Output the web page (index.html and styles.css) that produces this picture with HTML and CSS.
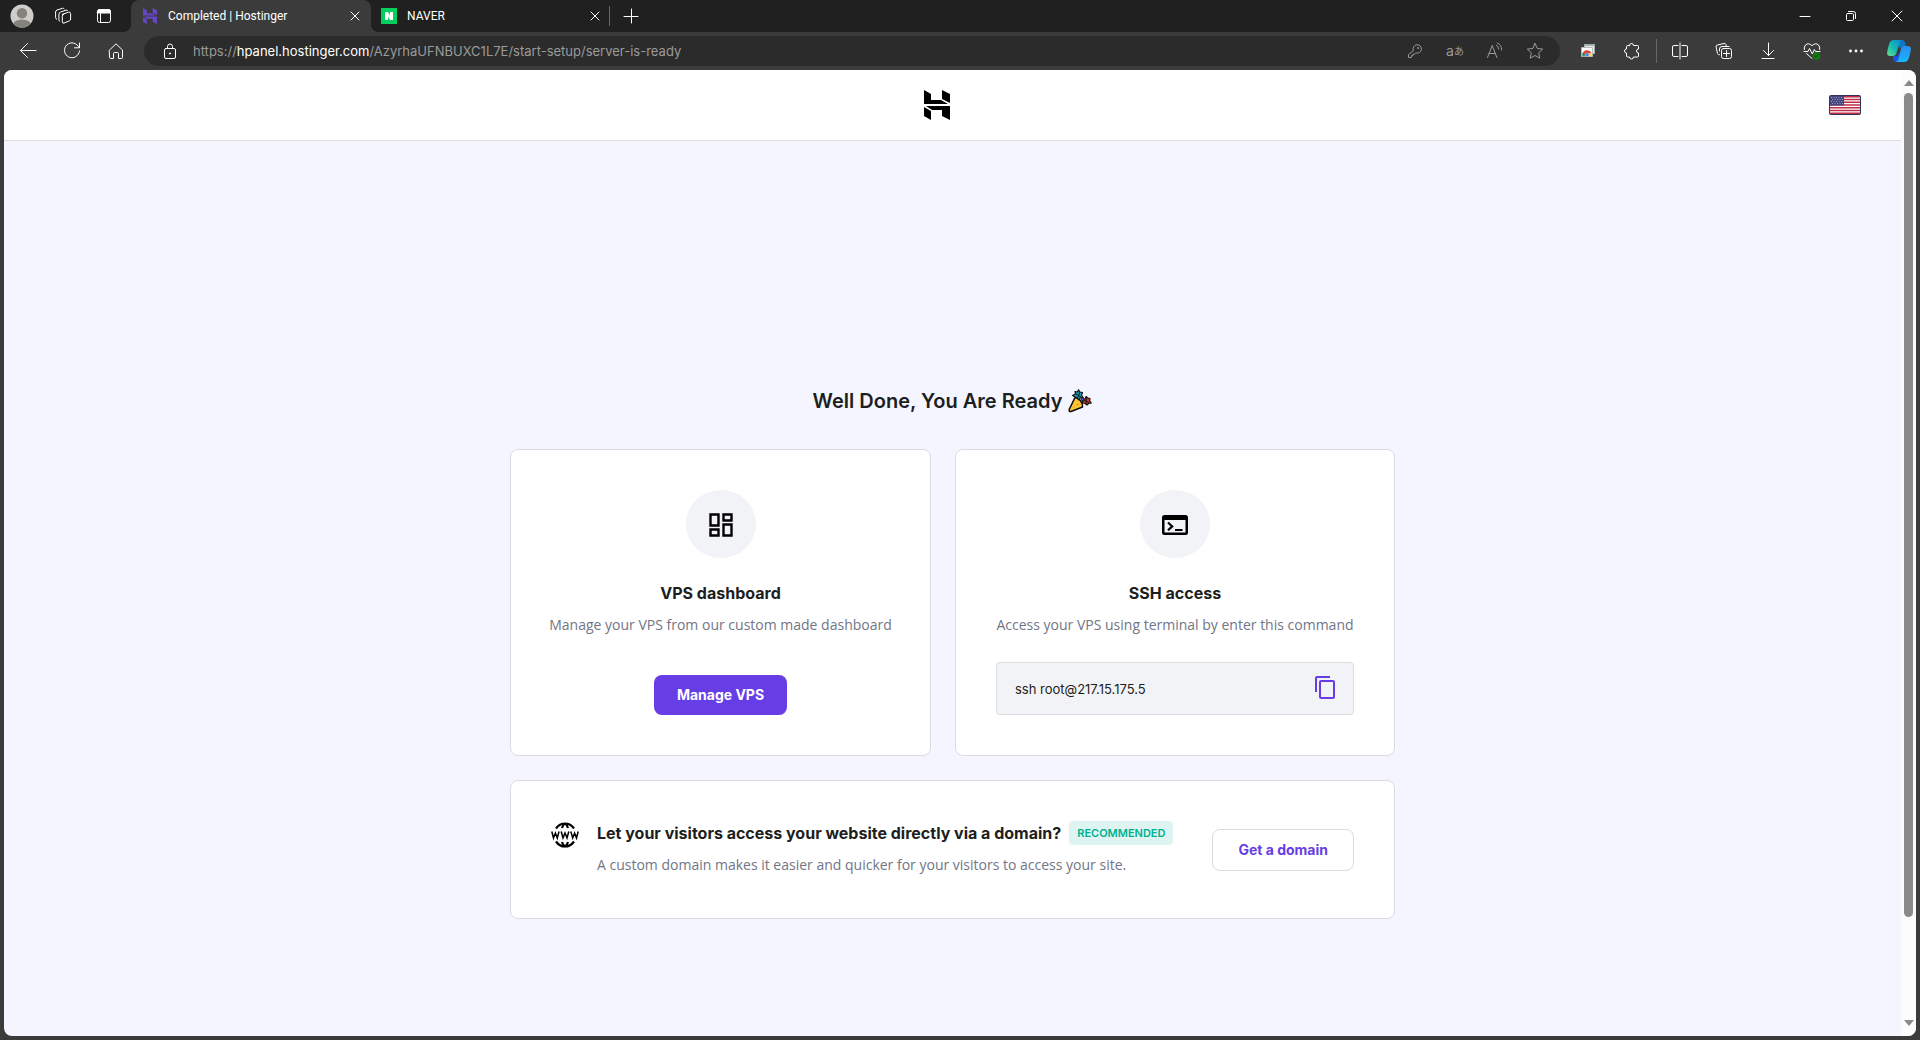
FILE: index.html
```html
<!DOCTYPE html>
<html lang="en">
<head>
<meta charset="utf-8">
<title>Completed | Hostinger</title>
<link rel="stylesheet" href="styles.css">
</head>
<body>
<div class="tabstrip">
  <div class="strip-tools">
    <button class="strip-btn" aria-label="Profile">
      <svg width="24" height="24" viewBox="0 0 24 24"><defs><clipPath id="face"><circle cx="12" cy="12" r="11.5"/></clipPath></defs><circle cx="12" cy="12" r="11.5" fill="#cfccc9"/><g fill="#85817d" clip-path="url(#face)"><circle cx="12" cy="9.2" r="5.2"/><ellipse cx="12" cy="21" rx="9" ry="5.6"/></g></svg>
    </button>
    <button class="strip-btn" aria-label="Workspaces">
      <svg class="line" width="18" height="18" viewBox="0 0 18 18"><path d="M8.2 7.4 14.6 5.2Q16.6 4.8 16.6 6.7V12Q16.6 13.4 15.3 13.9L10 16.1Q8.3 16.6 8.3 14.7V9.2Q8.3 7.7 9.8 7.2M5.7 14.4Q4.9 14 4.9 12.7V7.2Q4.9 5.6 6.3 5.1L12 3.2Q13.2 2.9 13.6 3.5M2.6 12.3Q1.6 12 1.6 10.6V5Q1.6 3.6 3 3L8.4 1.3Q9.7 1 10.2 1.8"/></svg>
    </button>
    <button class="strip-btn" aria-label="Vertical tabs">
      <svg class="line" width="16" height="16" viewBox="0 0 16 16"><rect x="1.5" y="1.5" width="13" height="13" rx="2"/><path d="M1.5 3.5Q1.5 1.5 3.5 1.5H12.500Q14.500 1.500 14.500 3.500V5H1.500Z" fill="#fff"/><path d="M4.500 5V14.500"/></svg>
    </button>
  </div>
  <div class="tab tab-active">
    <svg width="16" height="16" viewBox="0 0 26 30" fill="#6747c7"><path d="M0 0 7 4V10H17L24 14H0ZM18 0 26 4V13L18 9ZM26 16V30L18 26V20H8L2 16ZM0 17 7 21V30L0 26Z"/></svg>
    <span class="tab-title">Completed | Hostinger</span>
    <button class="tab-close" aria-label="Close tab"><svg class="line" width="10" height="10" viewBox="0 0 10 10"><path d="M1 1 9 9M9 1 1 9"/></svg></button>
  </div>
  <div class="tab">
    <svg width="16" height="16" viewBox="0 0 16 16"><path fill="#03cf5d" d="M0 0H16V16H0Z"/><path fill="#fff" d="M4 4H7L9 7.500V4H12V12H9L7 8.500V12H4Z"/></svg>
    <span class="tab-title">NAVER</span>
    <button class="tab-close" aria-label="Close tab"><svg class="line" width="10" height="10" viewBox="0 0 10 10"><path d="M1 1 9 9M9 1 1 9"/></svg></button>
  </div>
  <span class="tab-divider"></span>
  <button class="new-tab" aria-label="New tab"><svg class="line" width="14" height="14" viewBox="0 0 14 14"><path d="M7.500 0V14M0 7.500H14"/></svg></button>
  <div class="window-controls">
    <button class="window-btn" aria-label="Minimize"><svg class="line" width="10" height="10" viewBox="0 0 10 10"><path d="M0 5.500H10"/></svg></button>
    <button class="window-btn" aria-label="Restore"><svg class="line" width="10" height="10" viewBox="0 0 10 10"><rect x=".5" y="2.500" width="7" height="7" rx="1"/><path d="M2.500 .5H7.500Q9.500 .5 9.500 2.500V7.500"/></svg></button>
    <button class="window-btn" aria-label="Close"><svg class="line" width="10" height="10" viewBox="0 0 10 10"><path d="M0 0 10 10M10 0 0 10"/></svg></button>
  </div>
</div>

<div class="toolbar">
  <div class="nav-tools">
    <button class="tool-btn" aria-label="Back"><svg class="line" width="18" height="18" viewBox="0 0 18 18"><path d="M1.500 8.500H17M8.500 1.500 1.500 8.500 8.500 15.500"/></svg></button>
    <button class="tool-btn" aria-label="Refresh"><svg class="line" width="18" height="18" viewBox="0 0 18 18"><path d="M16 5.500A7.500 7.500 0 1 0 16.500 9M16.500 1V5.800H11.500"/></svg></button>
    <button class="tool-btn" aria-label="Home"><svg class="line" width="18" height="18" viewBox="0 0 18 18"><path d="M2.500 8 9 1.800 15.500 8V15.500Q15.500 16.500 14.500 16.500H11.500V11.500Q11.500 10.500 10.500 10.500H7.500Q6.500 10.500 6.500 11.500V16.500H3.500Q2.500 16.500 2.500 15.500Z"/></svg></button>
  </div>
  <div class="address">
    <button class="lock-btn" aria-label="Site information"><svg class="line" width="14" height="17" viewBox="0 0 14 17"><rect x="1.500" y="5.500" width="11" height="10" rx="1.500"/><path d="M4.500 5.500V3.500Q4.500 1 7 1T9.500 3.500V5.500"/><circle cx="7" cy="10.500" r=".6" fill="#fff"/></svg></button>
    <a class="url" href="#">https://<span class="url-host">hpanel.hostinger.com</span>/AzyrhaUFNBUXC1L7E/start-setup/server-is-ready</a>
    <div class="address-tools">
      <button class="address-btn" aria-label="Passwords"><svg class="line dim" width="16" height="16" viewBox="0 0 16 16"><path d="M6.200 7.200A4.200 4.200 0 1 1 8.800 9.900L7.500 11.200H6V12.700H4.500V14.200L4 14.500H1.500V12Z"/><circle cx="11" cy="5" r=".5"/></svg></button>
      <button class="address-btn" aria-label="Translate"><span class="glyph-a">a</span><span class="glyph-kana">あ</span></button>
      <button class="address-btn" aria-label="Read aloud"><svg class="line dim" width="18" height="18" viewBox="0 0 18 18"><path d="M1.500 15.500 6.200 3.500 10.900 15.500M3.200 11.500H9.200M10.300 3.200Q12.800 4.300 12.600 7M11.300 1Q16 2.800 15.600 8"/></svg></button>
      <button class="address-btn" aria-label="Add to favorites"><svg class="line dim" width="18" height="18" viewBox="0 0 18 18"><path d="M9 1.500 11.300 6.400 16.700 7.100 12.700 10.800 13.800 16.200 9 13.500 4.200 16.200 5.300 10.800 1.300 7.100 6.700 6.400Z"/></svg></button>
    </div>
  </div>
  <div class="browser-tools">
    <button class="tool-btn" aria-label="Web store"><svg width="16" height="16" viewBox="0 0 16 16"><path fill="#9fb0ac" d="M4 1H15V11H4Z"/><path fill="#e9eeec" d="M5 3H14V10H5Z"/><path fill="#fff" stroke="#b8b8b8" d="M1.500 4.500H12.500V13.500H1.500Z"/><path fill="#db4437" d="M2.500 11A4.800 4.800 0 0 1 11.500 10L9 10.500H5.500L4.500 12Z"/><path fill="#0f9d58" d="M2.300 9.500 5 12V13.200H2.300Z"/><path fill="#ffcd40" d="M9 10.300H11.700V13.200H8.500Z"/><circle cx="7" cy="11.700" r="1.800" fill="#4285f4"/></svg></button>
    <button class="tool-btn" aria-label="Extensions"><svg class="line" width="18" height="18" viewBox="0 0 18 18"><path d="M6.500 3.500A2 2 0 0 1 10.500 3.500H14.500Q15.500 3.500 15.500 4.500V7A2 2 0 0 0 15.500 11V14Q15.500 15 14.500 15H10.500A2 2 0 0 1 6.500 15H4.500Q3.500 15 3.500 14V11A2 2 0 0 1 3.500 7V4.500Q3.500 3.500 4.500 3.500Z"/></svg></button>
    <span class="tool-divider"></span>
    <button class="tool-btn" aria-label="Split screen"><svg class="line" width="18" height="18" viewBox="0 0 18 18"><path d="M7 3.500H3Q1.500 3.500 1.500 5V13Q1.500 14.500 3 14.500H7M11 3.500H15Q16.500 3.500 16.500 5V13Q16.500 14.500 15 14.500H11M9 1V17"/></svg></button>
    <button class="tool-btn" aria-label="Collections"><svg class="line" width="18" height="18" viewBox="0 0 18 18"><rect x="6.500" y="6.500" width="10" height="10" rx="2"/><path d="M11.500 8.500V14.500M8.500 11.500H14.500M4.500 12.800Q3 13 2.500 11.500L1.100 5Q.8 3.500 2.200 3.100L9 1.500Q10.600 1.200 11 2.700L11.400 4.500M4.500 9V7Q4.500 4.500 7 4.500H14"/></svg></button>
    <button class="tool-btn" aria-label="Downloads"><svg class="line" width="18" height="18" viewBox="0 0 18 18"><path d="M9.500 1V13.500M4.500 8.500 9.500 13.500 14.500 8.500M3 16.500H15"/></svg></button>
    <button class="tool-btn" aria-label="Browser essentials"><svg class="line" width="18" height="18" viewBox="0 0 18 18"><path d="M1.300 7.500Q.8 4.800 2.500 3Q5.500.3 9 3.700Q12.500.3 15.500 3Q17.200 4.800 16.700 7.500M1 9.500H5L6.500 6.500 9.300 12 11.300 7.500 12.500 9.500H17M3.500 11.500 9 16.500"/><circle cx="13.500" cy="14" r="3.800" fill="#107c10" stroke="none"/><path d="M11.800 14 13 15.200 15.300 12.700" stroke="#0a4f0a"/></svg></button>
    <button class="tool-btn" aria-label="Settings and more"><svg width="16" height="4" viewBox="0 0 16 4" fill="#fff"><circle cx="2.500" cy="2" r="1.400"/><circle cx="8" cy="2" r="1.400"/><circle cx="13.500" cy="2" r="1.400"/></svg></button>
    <button class="copilot-btn" aria-label="Copilot">
      <svg width="26" height="24" viewBox="0 0 26 24"><defs><linearGradient id="cpa" x1="0" y1="1" x2="1" y2="0"><stop offset="0" stop-color="#6ce08a"/><stop offset=".5" stop-color="#13b9b4"/><stop offset="1" stop-color="#0a8ad8"/></linearGradient><linearGradient id="cpb" x1="0" y1="0" x2="0" y2="1"><stop offset="0" stop-color="#2b8df0"/><stop offset="1" stop-color="#19b6ff"/></linearGradient></defs><path fill="#0b78c6" d="M8 1H16Q18.500 1 19.300 4L20 7H17Q15 7 14.200 9.500Z"/><path fill="#1f4fe0" d="M7 17H11L14 13 12.500 20Q11.800 23 9.500 22.800Q7.500 22.600 7 20Z"/><path fill="url(#cpa)" d="M8 1H14.500L10.500 14Q9.700 17 7 17H4Q.6 17 1.200 13Q2 8 3.500 4Q4.800 1 8 1Z"/><path fill="url(#cpb)" d="M17.500 7H21.500Q25.500 7 24.800 11Q24 16 22.500 20Q21.300 23 18.500 23H9.500Q11.800 22.500 12.500 20L15 9.500Q15.700 7 17.500 7Z"/></svg>
    </button>
  </div>
</div>

<div class="viewport">
  <div class="page">
    <header class="page-header">
      <a class="brand" href="#" aria-label="Hostinger"><svg width="26" height="30" viewBox="0 0 26 30"><path d="M0 0 7 4V10H17L24 14H0ZM18 0 26 4V13L18 9ZM26 16V30L18 26V20H8L2 16ZM0 17 7 21V30L0 26Z"/></svg></a>
      <button class="flag-btn" aria-label="Language">
        <svg width="32" height="20" viewBox="0 0 32 20"><rect width="32" height="20" rx="2" fill="#32355a"/><path fill="#fff" d="M1 1H31V19H1Z"/><path stroke="#c02c45" stroke-width="1.500" d="M1 1.800H31M1 4.500H31M1 7.300H31M1 10H31M1 12.800H31M1 15.500H31M1 18.200H31"/><path fill="#46467f" d="M1 1H15V10.500H1Z"/><path stroke="#9a9ac0" stroke-dasharray="1 1.500" d="M2 2.500H14M3 4.500H14M2 6.500H14M3 8.500H14"/></svg>
      </button>
    </header>
    <main class="content">
      <h1 class="headline">Well Done, You Are Ready
        <svg width="24" height="24" viewBox="0 0 24 24" aria-hidden="true"><path fill="#ffc634" stroke="#111" stroke-width="1.600" stroke-linejoin="round" d="M7 8.500Q10.500 8.500 13 12.500Q15 15.500 14.500 18L3 22.500Q.8 22.800 1.200 20.500Z"/><path fill="#18a2c4" stroke="#111" stroke-width="1.200" stroke-linejoin="round" d="M8.500 8.500 4.500 6.500 7.500 5 7 2.500 9.500 3 10.500.8 12 3 14.500 3.500 13.500 6 15 8.500 12 9 11 11Z"/><path stroke="#111" d="M8 5 13 8M12 3 9.500 9"/><path fill="#d7372a" stroke="#111" stroke-width="1.200" stroke-linejoin="round" d="M14 13.500 15.500 10.500 17.500 9.500 18 7.500 20 9 22 9.500 21.500 11.500 23.300 14 20.500 14.500 19 16 17 14.500Z"/><path stroke="#111" d="M16 11.500 21 13.500M18.500 9.500 18 14.500"/><path fill="#6d45d8" stroke="#111" stroke-width=".8" d="M13 9.500 15.500 8.500 16 10.500 14 12Z"/><circle cx="9.500" cy="15.500" r=".8" fill="#e35a3c"/><circle cx="6" cy="18" r=".8" fill="#e3903c"/></svg>
      </h1>
      <div class="cards">
        <section class="card card-center">
          <span class="badge-icon"><svg width="24" height="24" viewBox="0 0 24 24" fill="none" stroke="#000" stroke-width="2.400"><path d="M1.500 1.500H9.500V12.500H1.500ZM14.500 1.500H22.500V7.500H14.500ZM14.500 11.500H22.500V22.500H14.500ZM1.500 16.500H9.500V22.500H1.500Z"/></svg></span>
          <h2 class="card-title">VPS dashboard</h2>
          <p class="card-text">Manage your VPS from our custom made dashboard</p>
          <button class="btn btn-primary">Manage VPS</button>
        </section>
        <section class="card card-center">
          <span class="badge-icon"><svg width="26" height="20" viewBox="0 0 26 20"><path fill-rule="evenodd" d="M2.500 0H23.500Q26 0 26 2.500V17.500Q26 20 23.500 20H2.500Q0 20 0 17.500V2.500Q0 0 2.500 0ZM2.500 5V17.500H23.500V5Z"/><path fill="none" stroke="#000" stroke-width="2.200" d="M6 7.500 10.200 11.400 6 15.300M13 15H20.500"/></svg></span>
          <h2 class="card-title">SSH access</h2>
          <p class="card-text">Access your VPS using terminal by enter this command</p>
          <div class="command">
            <code class="command-text">ssh root@217.15.175.5</code>
            <button class="copy-btn" aria-label="Copy command"><svg width="20" height="24" viewBox="0 0 20 24" fill="none" stroke="#673de6" stroke-width="2"><path d="M1 17V3Q1 2 2 2H15"/><rect x="5" y="6" width="14" height="17" rx="1"/></svg></button>
          </div>
        </section>
      </div>
      <section class="card domain">
        <svg class="domain-icon" width="28" height="28" viewBox="0 0 28 28" fill="none" stroke="#000" stroke-width="2.200" aria-hidden="true"><path d="M5 7.500Q8.500 2.500 14 2.500T23 7.500M11 7Q12 3.500 14 2.500Q16 3.500 17 7M5 20.500Q8.500 25.500 14 25.500T23 20.500M11 21Q12 24.500 14 25.500Q16 24.500 17 21"/><path stroke-width="1.500" d="M.8 10.500 2.500 17 4.400 12 6.300 17 8 10.500M10.200 10.500 12 17 14 12 16 17 17.800 10.500M19.800 10.500 21.700 17 23.600 12 25.500 17 27.200 10.500"/></svg>
        <div class="domain-body">
          <div class="domain-head">
            <h2 class="card-title">Let your visitors access your website directly via a domain?</h2>
            <span class="tag">Recommended</span>
          </div>
          <p class="card-text">A custom domain makes it easier and quicker for your visitors to access your site.</p>
        </div>
        <button class="btn btn-outline">Get a domain</button>
      </section>
    </main>
  </div>
  <div class="scrollbar" aria-hidden="true">
    <svg width="10" height="6" viewBox="0 0 10 6" fill="#8a8a8a"><path d="M0 6 5 0 10 6Z"/></svg>
    <div class="scroll-track"><div class="scroll-thumb"></div><div class="scroll-rest"></div></div>
    <svg width="10" height="6" viewBox="0 0 10 6" fill="#8a8a8a"><path d="M0 0 5 6 10 0Z"/></svg>
  </div>
</div>
</body>
</html>
```
FILE: styles.css
```css
* { box-sizing: border-box; }

body {
  margin: 0;
  height: 100vh;
  display: flex;
  flex-direction: column;
  overflow: hidden;
  background: #3b3b3b;
  font-family: Inter, "Noto Sans CJK JP", sans-serif;
  color: #1d1e20;
}

svg { display: block; flex: none; }
h1, h2, p { margin: 0; }

button {
  display: flex;
  align-items: center;
  justify-content: center;
  flex: none;
  margin: 0;
  padding: 0;
  border: 0;
  background: none;
  font-family: inherit;
  cursor: pointer;
}

.line { fill: none; stroke: #fff; stroke-linecap: round; stroke-linejoin: round; overflow: visible; }
.dim { stroke: #9a9a9a; }

/* Tab strip */
.tabstrip { display: flex; height: 32px; background: #202020; }
.strip-tools { display: flex; padding: 0 7px 0 1px; }
.strip-btn { width: 41px; }

.tab {
  position: relative;
  display: flex;
  align-items: center;
  width: 238px;
  padding: 0 8px 0 10px;
  gap: 10px;
  color: #fff;
  font: 12px/16px Roboto, sans-serif;
}
.tab-title { flex: 1; padding-bottom: 1px; white-space: nowrap; }
.tab-close { width: 12px; height: 16px; }
.tab-active {
  width: 240px;
  padding: 0 10px 0 11px;
  border-radius: 8px 8px 0 0;
  background: #3b3b3b;
}
.tab-active::before,
.tab-active::after {
  content: "";
  position: absolute;
  bottom: 0;
  width: 8px;
  height: 8px;
}
.tab-active::before { right: 100%; background: radial-gradient(circle at 0 0, #202020 8px, #3b3b3b 8px); }
.tab-active::after { left: 100%; background: radial-gradient(circle at 100% 0, #202020 8px, #3b3b3b 8px); }
.tab-divider { width: 1px; margin: 6px 0; background: #666; }
.new-tab { width: 42px; }
.window-controls { display: flex; margin-left: auto; }
.window-btn { width: 46px; }

/* Toolbar */
.toolbar { display: flex; height: 38px; padding: 4px 0; }
.nav-tools { display: flex; padding: 0 6px; }
.tool-btn { width: 44px; }
.copilot-btn { width: 42px; }
.address {
  flex: 1;
  display: flex;
  align-items: center;
  min-width: 0;
  padding: 0 5px 0 18px;
  border-radius: 15px;
  background: #2b2b2b;
}
.lock-btn { width: 16px; margin-right: 15px; }
.url {
  flex: 1;
  overflow: hidden;
  color: #9a9a9a;
  font-size: 13px;
  line-height: 18px;
  white-space: nowrap;
  text-decoration: none;
}
.url-host { color: #fff; }
.address-tools { display: flex; align-self: stretch; }
.address-btn { width: 40px; color: #9a9a9a; line-height: 16px; }
.glyph-a { font-size: 14px; }
.glyph-kana { font-size: 10px; }
.browser-tools { display: flex; padding-left: 6px; }
.tool-divider { width: 1px; margin: 3px 1px 3px 2px; background: #666; }

/* Web page area */
.viewport {
  flex: 1;
  display: flex;
  min-height: 0;
  margin: 0 4px 4px;
  border-radius: 8px;
  overflow: hidden;
  background: #f4f5ff;
}
.page { flex: 1; min-width: 0; overflow: hidden; }
.page-header {
  display: flex;
  align-items: center;
  height: 71px;
  padding: 0 40px;
  border-bottom: 1px solid #dadce0;
  background: #fff;
}
.brand { flex: 1; display: flex; justify-content: center; }

.content {
  display: flex;
  flex-direction: column;
  gap: 24px;
  width: 100%;
  max-width: 933px;
  margin: 0 auto;
  padding: 244px 24px 40px;
}
.headline {
  display: flex;
  align-items: center;
  justify-content: center;
  gap: 6px;
  margin-bottom: 8px;
  font-size: 20px;
  font-weight: 600;
  line-height: 32px;
}
.cards { display: grid; grid-template-columns: minmax(0, 421fr) minmax(0, 440fr); gap: 24px; }
.card {
  padding: 40px;
  border: 1px solid #dadce0;
  border-radius: 8px;
  background: #fff;
}
.card-center { display: flex; flex-direction: column; align-items: center; }
.badge-icon {
  display: flex;
  align-items: center;
  justify-content: center;
  width: 70px;
  height: 68px;
  padding-top: 2px;
  margin-bottom: 23px;
  border-radius: 50%;
  background: #f2f3f6;
}
.card-title { font-size: 16px; font-weight: 700; line-height: 24px; white-space: nowrap; }
.card-text {
  margin-top: 10px;
  color: #727586;
  font-family: "Open Sans", sans-serif;
  font-size: 14px;
  line-height: 20px;
  white-space: nowrap;
}

.btn { border-radius: 8px; font-size: 14px; font-weight: 700; line-height: 20px; }
.btn-primary { height: 40px; margin-top: auto; padding: 0 23px; background: #673de6; color: #fff; }
.btn-outline { height: 42px; padding: 0 25px; border: 1px solid #dadce0; background: #fff; color: #673de6; }

.command {
  display: flex;
  align-items: center;
  justify-content: space-between;
  align-self: stretch;
  height: 53px;
  margin-top: 27px;
  padding: 0 18px;
  border: 1px solid #dadce0;
  border-radius: 4px;
  background: #f2f3f6;
}
.command-text { font-family: inherit; font-size: 13px; line-height: 20px; }
.copy-btn { padding-bottom: 4px; }

.domain { display: flex; align-items: center; }
.domain-icon { align-self: flex-start; margin-right: 18px; }
.domain-body { flex: 1; padding-bottom: 3px; }
.domain-head { display: flex; align-items: center; gap: 8px; }
.tag {
  padding: 0 8px;
  border-radius: 4px;
  background: #def4f0;
  color: #00b090;
  font-size: 11px;
  font-weight: 600;
  line-height: 24px;
  text-transform: uppercase;
}

/* Scrollbar */
.scrollbar {
  display: flex;
  flex-direction: column;
  align-items: center;
  width: 15px;
  padding: 10px 0;
  background: #fcfcfc;
}
.scroll-track { flex: 1; display: flex; flex-direction: column; width: 9px; padding: 7px 0 5px; }
.scroll-thumb { flex: 824; border-radius: 5px; background: #8a8a8a; }
.scroll-rest { flex: 98; }
```
